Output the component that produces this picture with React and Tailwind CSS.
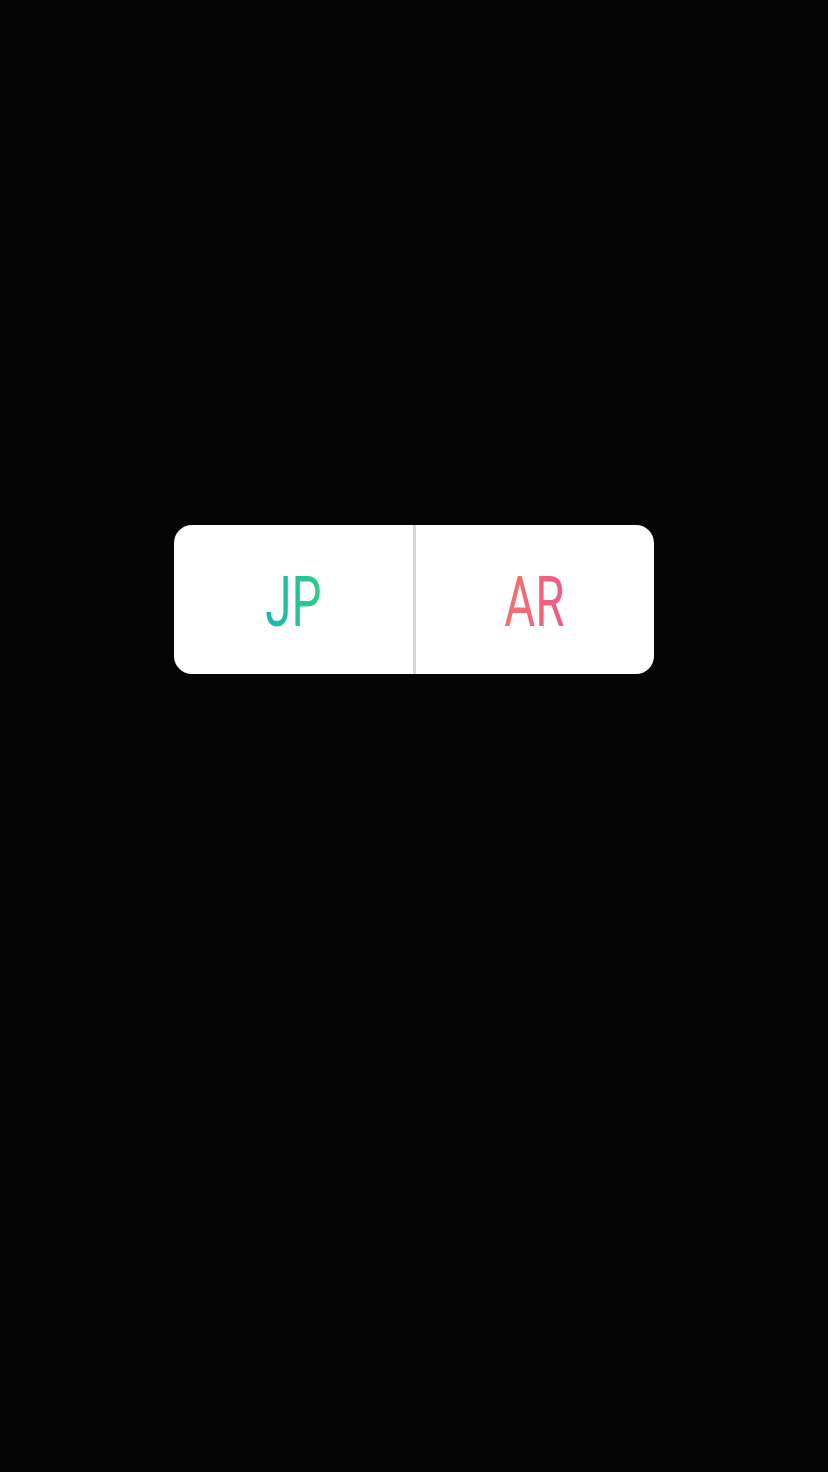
export default function App() {
  return (
    <div className="w-[828px] h-[1472px] bg-[#040404] flex flex-col items-center pt-[525px]">
      <div className="flex w-[480px] h-[149px] bg-white rounded-[18px] overflow-hidden">
        <div className="flex-1 flex items-center justify-center pt-[5px]">
          <span
            className="inline-block scale-x-[0.68] text-[70px] leading-none font-normal bg-gradient-to-r from-[#17b5b2] to-[#2fcf86] bg-clip-text text-transparent"
            style={{ fontFamily: "Roboto, 'Liberation Sans', sans-serif" }}
          >
            JP
          </span>
        </div>
        <div className="w-[3px] bg-[#d6d6d6]" />
        <div className="flex-1 flex items-center justify-center pt-[5px]">
          <span
            className="inline-block scale-x-[0.68] text-[70px] leading-none font-normal bg-gradient-to-r from-[#f4716a] to-[#ee5b87] bg-clip-text text-transparent"
            style={{ fontFamily: "Roboto, 'Liberation Sans', sans-serif" }}
          >
            AR
          </span>
        </div>
      </div>
    </div>
  );
}
